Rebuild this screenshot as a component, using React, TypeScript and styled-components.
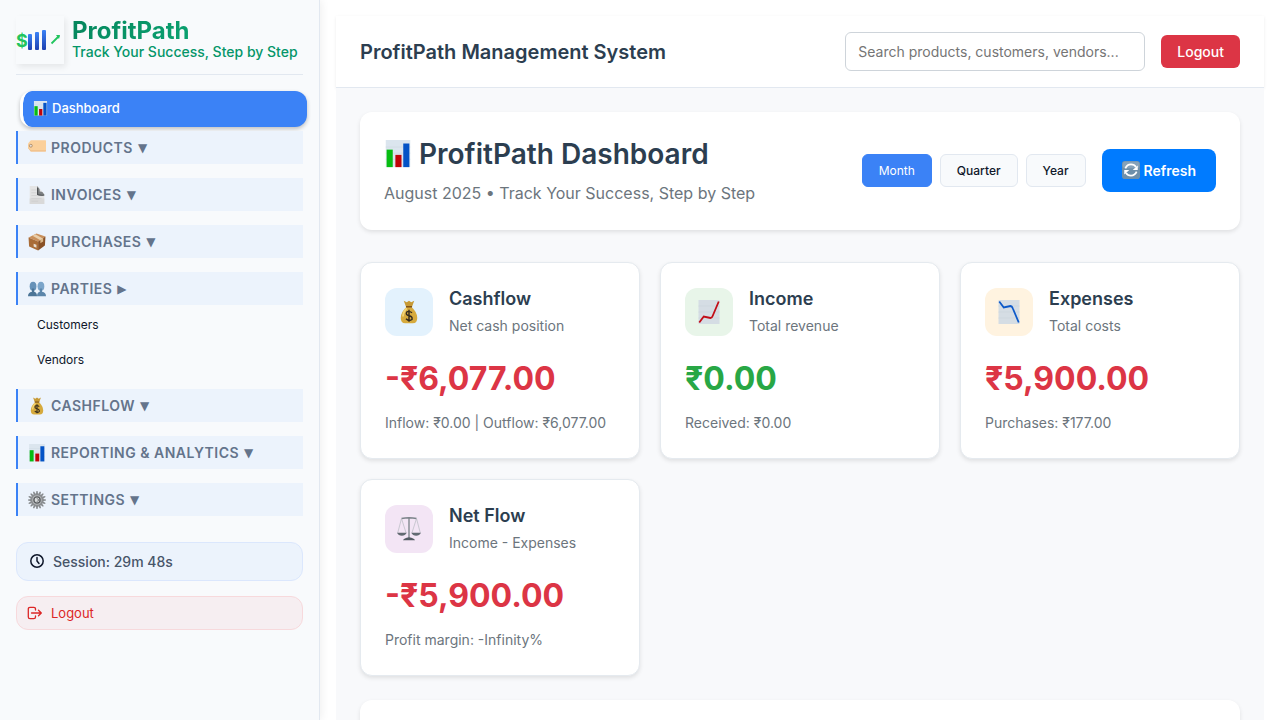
import React, { useState } from "react";
import styled, { createGlobalStyle, css } from "styled-components";

const GlobalStyle = createGlobalStyle`
  *, *::before, *::after { box-sizing: border-box; }
  body {
    margin: 0;
    background: #ffffff;
    color: #0f172a;
    font-family: Inter, "Liberation Sans", sans-serif;
    font-size: 14px;
  }
  button, input { font-family: inherit; }
  h1, h2, h3, p { margin: 0; }
  svg { display: block; flex: none; }
`;

/* ---------- Pictograms ---------- */

type IconName =
  | "chart" | "tag" | "page" | "box" | "people" | "money"
  | "gear" | "refresh" | "up" | "down" | "scales";

const gearTeeth = Array.from({ length: 16 }, (_, i) => (i * 360) / 16);

const drawings: Record<IconName, React.ReactNode> = {
  chart: (
    <>
      <path d="M2 0h28v31H2z" fill="#dbe5ee" />
      <path d="M2 8h28M2 15h28M2 22h28" stroke="#d0dbe5" strokeWidth="1" />
      <path d="M3 11h7v20H3z" fill="#06bd12" />
      <path d="M13 17h7v14h-7z" fill="#c00408" />
      <path d="M22 4h7v27h-7z" fill="#0453c6" />
    </>
  ),
  tag: (
    <>
      <path d="M5 2h26q1 0 1 1v18q0 1-1 1H5l-5-6V8z" fill="#fbd09b" />
      <path d="M5 20h27v1q0 1-1 1H5l-5-6v-1z" fill="#efbf8a" />
      <circle cx="5" cy="12" r="2.600" fill="#e7dfd6" stroke="#a7835f" strokeWidth="1.400" />
    </>
  ),
  page: (
    <>
      <path d="M3 0h14l12 14v18H3z" fill="#e4e4e4" />
      <path d="M3 22h26v10H3z" fill="#d9d9d9" />
      <path d="M6 7h9M6 12h9M6 17h18M6 22h18M6 27h12" stroke="#cdcdcd" strokeWidth="1.200" />
      <path d="M16 0q5 4 5 10 5-1 8 6-6 2-12 0z" fill="#7d8082" />
      <path d="M17 3v12q5 2 12 1" fill="none" stroke="#505355" strokeWidth="2" />
    </>
  ),
  box: (
    <>
      <path d="M1 8 15 1l16 5-13 9z" fill="#c98f5a" />
      <path d="M1 8l17 7v16L2 24z" fill="#a96c37" />
      <path d="M31 6 18 15v16l12-9z" fill="#895126" />
      <path d="m8 5 5-3 14 8-5 3z" fill="#e9cfab" />
      <path d="m22 12 5-3v6l-5 3z" fill="#dbb889" />
      <path d="m10 19 5 2v5l-5-2z" fill="#e8ddcf" />
    </>
  ),
  people: (
    <>
      <ellipse cx="9" cy="11" rx="6" ry="8" fill="#6792b8" />
      <ellipse cx="23" cy="11" rx="6" ry="8" fill="#7ba5ca" />
      <path d="M0 29q0-7 7-8v-6h4v6q5 1 5 8z" fill="#4c7597" />
      <path d="M16 29q0-7 5-8v-6h4v6q7 1 7 8z" fill="#5c86aa" />
    </>
  ),
  money: (
    <>
      <path d="M9 1l4 2 3-2 3 2 4-2-3 8h-8z" fill="#c79a35" />
      <path d="M13 9h6q8 7 8 15 0 7-6 7H11q-6 0-6-7 0-8 8-15z" fill="#d6aa3d" />
      <path d="M13 11q-5 5-5 11" fill="none" stroke="#f2d375" strokeWidth="2.500" />
      <path d="M12 9h8" stroke="#7f5219" strokeWidth="2" />
      <path d="M20 17q-4-3-7-1-2 4 3 5t4 5q-4 3-8-1M16 13v16" fill="none" stroke="#332a1d" strokeWidth="1.900" />
    </>
  ),
  gear: (
    <>
      {gearTeeth.map((angle) => (
        <path key={angle} d="M15 0h2l1 6h-4z" fill="#85888b" transform={`rotate(${angle} 16 16)`} />
      ))}
      <circle cx="16" cy="16" r="10" fill="#b4b7b9" stroke="#8a8d90" strokeWidth="3" />
      <circle cx="16" cy="16" r="5.500" fill="#d8dadb" stroke="#5c5f62" strokeWidth="2.500" />
      <path d="m16 13 3 3-3 3" fill="none" stroke="#55585b" strokeWidth="1.600" />
    </>
  ),
  refresh: (
    <>
      <rect width="32" height="32" rx="5" fill="#6d8faa" />
      <rect x="1" y="1" width="30" height="12" rx="5" fill="#86a2b9" />
      <path d="M6 13q3-7 10-7 6 0 9 5M26 19q-3 7-10 7-6 0-9-5" fill="none" stroke="#ffffff" strokeWidth="3" />
      <path d="M28 8v8h-9zM4 24v-8h9z" fill="#ffffff" />
    </>
  ),
  up: (
    <>
      <path d="M2 0h28v32H2z" fill="#d5dde4" />
      <path d="M2 8h28M2 16h28M2 24h28" stroke="#ccd5dc" strokeWidth="1" />
      <path d="m3 30 6-8 9 2q2 0 3-3l8-19" fill="none" stroke="#c20d18" strokeWidth="2.400" />
    </>
  ),
  down: (
    <>
      <path d="M2 0h28v32H2z" fill="#d5dde4" />
      <path d="M2 8h28M2 16h28M2 24h28" stroke="#ccd5dc" strokeWidth="1" />
      <path d="m3 2 6 8 9-2q2 0 3 3l8 19" fill="none" stroke="#0c59c9" strokeWidth="2.400" />
    </>
  ),
  scales: (
    <>
      <path d="M6 2q10-2 20 0M16 1v28" fill="none" stroke="#7d848b" strokeWidth="1.800" />
      <path d="m6 2-5 19M6 2l6 19M26 2l-6 19M26 2l5 19" fill="none" stroke="#b4b9bf" strokeWidth="0.900" />
      <path d="M0 21h13q-2 4-6.500 4T0 21zM19 21h13q-2 4-6.500 4T19 21z" fill="#626a72" />
      <path d="M8 31q1-3 8-4 7 1 8 4z" fill="#535b63" />
    </>
  ),
};

function Pictogram({ name, size }: { name: IconName; size: number }) {
  return (
    <svg width={size} height={size} viewBox="0 0 32 32" aria-hidden="true">
      {drawings[name]}
    </svg>
  );
}

/* ---------- Sidebar ---------- */

const Shell = styled.div`
  display: flex;
  height: 100vh;
  overflow: hidden;
`;

const Sidebar = styled.aside`
  flex: none;
  width: 320px;
  padding: 16px;
  overflow: hidden;
  background: #f8fafc;
  border-right: 1px solid #e2e8f0;
  box-shadow: 2px 0 8px rgba(0, 0, 0, 0.06);
`;

const Brand = styled.div`
  display: flex;
  gap: 8px;
  padding-bottom: 10px;
  margin-bottom: 16px;
  border-bottom: 1px solid #e2e8f0;
`;

const LogoBox = styled.div`
  flex: none;
  width: 48px;
  height: 48px;
  box-shadow: 2px 3px 6px rgba(0, 0, 0, 0.08);
`;

const BrandName = styled.p`
  font-size: 24px;
  line-height: 30px;
  font-weight: 700;
  color: transparent;
  background: linear-gradient(135deg, #05855c, #10b981);
  background-clip: text;
  -webkit-background-clip: text;
`;

const Tagline = styled.p`
  font-size: 14px;
  line-height: 12px;
  font-weight: 500;
  color: #059669;
  white-space: nowrap;
`;

const Nav = styled.nav`
  display: flex;
  flex-direction: column;
`;

const DashboardLink = styled.a`
  display: flex;
  align-items: center;
  gap: 4px;
  height: 36px;
  margin: 0 -4px 4px 4px;
  padding: 0 10px 2px;
  border-left: 3px solid #ffffff;
  border-radius: 12px;
  background: #3b82f6;
  background-clip: padding-box;
  box-shadow: 0 2px 4px rgba(0, 0, 0, 0.24);
  color: #ffffff;
  font-size: 13px;
  font-weight: 500;
  text-decoration: none;
`;

const Section = styled.div`
  margin-bottom: 14px;
`;

const SectionButton = styled.button`
  display: flex;
  align-items: center;
  gap: 5px;
  width: 100%;
  height: 33px;
  padding: 0 10px;
  border: 0;
  border-left: 2px solid #3b82f6;
  background: #ecf3fc;
  color: #64748b;
  font-size: 14px;
  font-weight: 600;
  letter-spacing: 0.035em;
  text-transform: uppercase;
  text-align: left;
`;

const Caret = styled.span`
  font-family: "DejaVu Sans", sans-serif;
  font-size: 12px;
  font-weight: 400;
`;

const SubList = styled.div`
  display: flex;
  flex-direction: column;
  padding: 2px 0 0 21px;
  margin-bottom: -2px;
`;

const SubLink = styled.a`
  color: #0f172a;
  font-size: 12px;
  line-height: 35px;
  text-decoration: none;
`;

const Session = styled.div`
  display: flex;
  align-items: center;
  gap: 8px;
  height: 39px;
  margin: 12px 0 15px;
  padding: 0 12px;
  border: 1px solid #dbe7fd;
  border-radius: 12px;
  background: #ecf3fc;
  color: #475569;
  font-size: 14px;
  font-weight: 500;
`;

const SideLogout = styled.button`
  display: flex;
  align-items: center;
  gap: 8px;
  width: 100%;
  height: 34px;
  padding: 0 10px;
  border: 1px solid #f7d9dc;
  border-radius: 12px;
  background: #f6eef1;
  color: #dc2626;
  font-size: 13px;
`;

/* ---------- Main area ---------- */

const Main = styled.main`
  flex: 1;
  min-width: 0;
  margin: 16px 16px 0;
  background: #f8f9fb;
`;

const TopBar = styled.header`
  display: flex;
  align-items: center;
  gap: 16px;
  padding: 16px 24px;
  border-bottom: 1px solid #e2e8f0;
  background: #ffffff;
  box-shadow: 0 1px 3px rgba(0, 0, 0, 0.08);
`;

const SystemTitle = styled.h1`
  flex: 1;
  color: #2c3e50;
  font-size: 20px;
  line-height: 32px;
  font-weight: 600;
`;

const Search = styled.input`
  width: 300px;
  height: 39px;
  padding: 0 12px;
  border: 1px solid #ced4da;
  border-radius: 6px;
  background: #ffffff;
  color: #2c3e50;
  font-size: 14px;
  &::placeholder { color: #757575; }
`;

const TopLogout = styled.button`
  height: 33px;
  padding: 0 16px;
  border: 0;
  border-radius: 6px;
  background: #dc3545;
  color: #ffffff;
  font-size: 14px;
  font-weight: 500;
`;

const Content = styled.div`
  position: relative;
  padding: 24px;
  background: #f8f9fb;
`;

const panel = css`
  border-radius: 12px;
  background: #ffffff;
  box-shadow: 0 2px 4px rgba(0, 0, 0, 0.1);
`;

const Hero = styled.section`
  ${panel}
  display: flex;
  align-items: center;
  justify-content: space-between;
  padding: 24px;
  margin-bottom: 32px;
`;

const HeroTitle = styled.h2`
  display: flex;
  align-items: center;
  gap: 7px;
  margin-bottom: 8px;
  color: #2c3e50;
  font-size: 28px;
  line-height: 36px;
  font-weight: 600;
`;

const HeroText = styled.p`
  color: #6c757d;
  font-size: 16px;
  line-height: 26px;
`;

const Actions = styled.div`
  display: flex;
  align-items: center;
  gap: 16px;
  padding-bottom: 2px;
`;

const Periods = styled.div`
  display: flex;
  gap: 8px;
`;

const PeriodButton = styled.button<{ $active: boolean }>`
  height: 33px;
  padding: 0 16px;
  border: 1px solid ${(p) => (p.$active ? "#3b82f6" : "#e2e8f0")};
  border-radius: 6px;
  background: ${(p) => (p.$active ? "#3b82f6" : "#f8fafc")};
  color: ${(p) => (p.$active ? "#ffffff" : "#0f172a")};
  font-size: 12px;
  font-weight: ${(p) => (p.$active ? 400 : 500)};
`;

const RefreshButton = styled.button`
  display: flex;
  align-items: center;
  gap: 4px;
  height: 43px;
  padding: 0 20px;
  border: 0;
  border-radius: 8px;
  background: #007bff;
  color: #ffffff;
  font-size: 14px;
  font-weight: 600;
`;

const Grid = styled.section`
  display: grid;
  grid-template-columns: repeat(auto-fill, minmax(250px, 1fr));
  gap: 20px;
  margin-bottom: 24px;
`;

const Card = styled.article`
  ${panel}
  padding: 24px;
  border: 1px solid #e5eaef;
`;

const CardHead = styled.div`
  display: flex;
  align-items: center;
  gap: 16px;
  margin-bottom: 16px;
`;

const IconTile = styled.div<{ $tint: string }>`
  display: flex;
  align-items: center;
  justify-content: center;
  width: 48px;
  height: 48px;
  border-radius: 12px;
  background: ${(p) => p.$tint};
`;

const CardTitle = styled.h3`
  margin-bottom: 4px;
  color: #2c3e50;
  font-size: 18px;
  line-height: 24px;
  font-weight: 600;
`;

const Muted = styled.p`
  color: #6c757d;
  font-size: 14px;
  line-height: 22px;
`;

const Amount = styled.p<{ $positive?: boolean }>`
  margin-bottom: 8px;
  color: ${(p) => (p.$positive ? "#28a745" : "#dc3545")};
  font-size: 32px;
  line-height: 51px;
  font-weight: 700;
`;

const LowerPanel = styled.section`
  ${panel}
  min-height: 240px;
`;

const sections: { icon: IconName; label: string; items?: string[] }[] = [
  { icon: "tag", label: "Products" },
  { icon: "page", label: "Invoices" },
  { icon: "box", label: "Purchases" },
  { icon: "people", label: "Parties", items: ["Customers", "Vendors"] },
  { icon: "money", label: "Cashflow" },
  { icon: "chart", label: "Reporting & Analytics" },
  { icon: "gear", label: "Settings" },
];

const cards: {
  icon: IconName; tint: string; title: string; note: string;
  amount: string; positive?: boolean; detail: string;
}[] = [
  { icon: "money", tint: "#e3f2fd", title: "Cashflow", note: "Net cash position", amount: "-₹6,077.00", detail: "Inflow: ₹0.00 | Outflow: ₹6,077.00" },
  { icon: "up", tint: "#e8f5e9", title: "Income", note: "Total revenue", amount: "₹0.00", positive: true, detail: "Received: ₹0.00" },
  { icon: "down", tint: "#fff3e0", title: "Expenses", note: "Total costs", amount: "₹5,900.00", detail: "Purchases: ₹177.00" },
  { icon: "scales", tint: "#f3e5f5", title: "Net Flow", note: "Income - Expenses", amount: "-₹5,900.00", detail: "Profit margin: -Infinity%" },
];

function Logo() {
  return (
    <LogoBox>
      <svg width="48" height="48" viewBox="0 0 48 48" role="img" aria-label="ProfitPath logo">
        <defs>
          <linearGradient id="bar" x1="0" y1="0" x2="0" y2="1">
            <stop offset="0" stopColor="#3b82f6" />
            <stop offset="1" stopColor="#1e40af" />
          </linearGradient>
        </defs>
        <text x="0" y="31" fontSize="18" fontWeight="700" fill="#22c55e">$</text>
        <rect x="12" y="18" width="4" height="16" rx="1" fill="url(#bar)" />
        <rect x="19" y="16" width="4" height="18" rx="1" fill="url(#bar)" />
        <rect x="26" y="14" width="4" height="20" rx="1" fill="url(#bar)" />
        <path d="M35.500 27.500 43 20" stroke="#22c55e" strokeWidth="1.800" />
        <path d="M40 19h4l-1 4z" fill="#22c55e" />
      </svg>
    </LogoBox>
  );
}

export default function App() {
  const [period, setPeriod] = useState("Month");
  return (
    <>
      <GlobalStyle />
      <Shell>
        <Sidebar>
          <Brand>
            <Logo />
            <div>
              <BrandName>ProfitPath</BrandName>
              <Tagline>Track Your Success, Step by Step</Tagline>
            </div>
          </Brand>
          <Nav>
            <DashboardLink href="#dashboard">
              <Pictogram name="chart" size={15} />
              Dashboard
            </DashboardLink>
            {sections.map((s) => (
              <Section key={s.label}>
                <SectionButton type="button" aria-expanded={Boolean(s.items)}>
                  <Pictogram name={s.icon} size={18} />
                  <span>{s.label}</span>
                  <Caret>{s.items ? "▶" : "▼"}</Caret>
                </SectionButton>
                {s.items && (
                  <SubList>
                    {s.items.map((item) => (
                      <SubLink key={item} href={`#${item.toLowerCase()}`}>{item}</SubLink>
                    ))}
                  </SubList>
                )}
              </Section>
            ))}
          </Nav>
          <Session>
            <svg width="16" height="16" viewBox="0 0 16 16" fill="none" stroke="#0f172a" strokeWidth="1.500" strokeLinecap="round" aria-hidden="true">
              <circle cx="8" cy="7" r="6.200" />
              <path d="M8 3.500V7l2 2.500" />
            </svg>
            Session: 29m 48s
          </Session>
          <SideLogout type="button">
            <svg width="16" height="16" viewBox="0 0 16 16" fill="none" stroke="#dc2626" strokeWidth="1.300" strokeLinecap="round" strokeLinejoin="round" aria-hidden="true">
              <path d="M8.500 5V4q0-1.700-1.700-1.700H3Q1.300 2.300 1.300 4v8q0 1.700 1.700 1.700h3.800q1.700 0 1.700-1.700v-1" />
              <path d="M4.500 8h9.500M11.500 5.200 14.300 8l-2.800 2.800" />
            </svg>
            Logout
          </SideLogout>
        </Sidebar>
        <Main>
          <TopBar>
            <SystemTitle>ProfitPath Management System</SystemTitle>
            <Search type="search" aria-label="Search" placeholder="Search products, customers, vendors..." />
            <TopLogout type="button">Logout</TopLogout>
          </TopBar>
          <Content>
            <Hero>
              <div>
                <HeroTitle>
                  <Pictogram name="chart" size={28} />
                  ProfitPath Dashboard
                </HeroTitle>
                <HeroText>August 2025 • Track Your Success, Step by Step</HeroText>
              </div>
              <Actions>
                <Periods>
                  {["Month", "Quarter", "Year"].map((p) => (
                    <PeriodButton key={p} type="button" $active={p === period} onClick={() => setPeriod(p)}>
                      {p}
                    </PeriodButton>
                  ))}
                </Periods>
                <RefreshButton type="button">
                  <Pictogram name="refresh" size={18} />
                  Refresh
                </RefreshButton>
              </Actions>
            </Hero>
            <Grid>
              {cards.map((c) => (
                <Card key={c.title}>
                  <CardHead>
                    <IconTile $tint={c.tint}>
                      <Pictogram name={c.icon} size={24} />
                    </IconTile>
                    <div>
                      <CardTitle>{c.title}</CardTitle>
                      <Muted>{c.note}</Muted>
                    </div>
                  </CardHead>
                  <Amount $positive={c.positive}>{c.amount}</Amount>
                  <Muted>{c.detail}</Muted>
                </Card>
              ))}
            </Grid>
            <LowerPanel />
          </Content>
        </Main>
      </Shell>
    </>
  );
}
